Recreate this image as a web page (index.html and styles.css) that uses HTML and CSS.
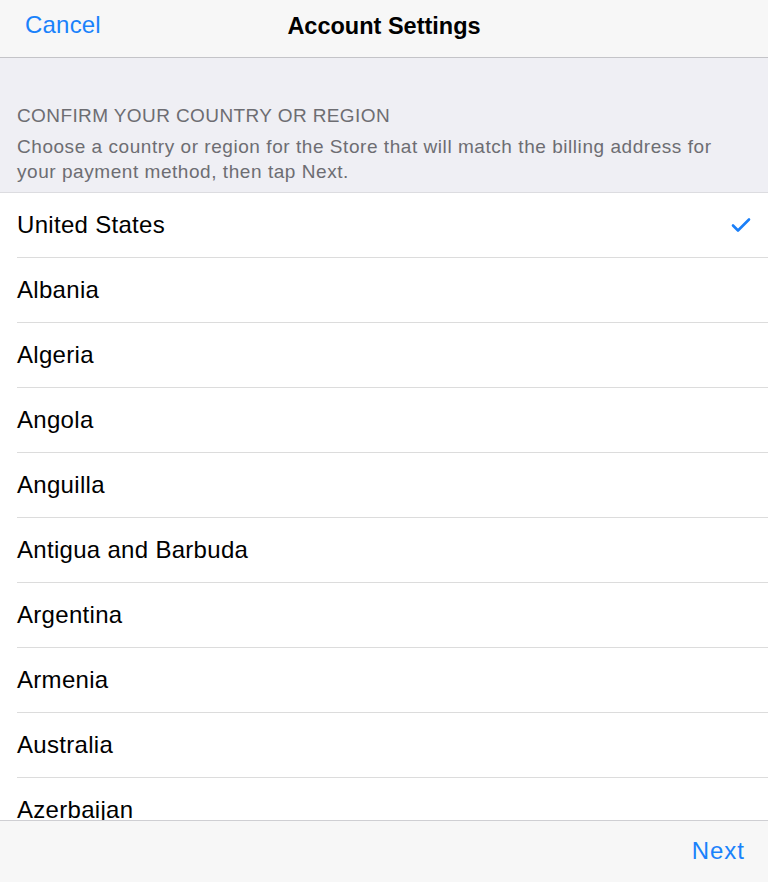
FILE: index.html
```html
<!DOCTYPE html>
<html>
<head>
<meta charset="utf-8">
<link rel="stylesheet" href="styles.css">
</head>
<body>
<div class="screen">
  <header class="navbar">
    <span class="nav-btn">Cancel</span>
    <span class="nav-title">Account Settings</span>
  </header>
  <section class="intro">
    <div class="intro-title">CONFIRM YOUR COUNTRY OR REGION</div>
    <div class="intro-text">Choose a country or region for the Store that will match the billing address for your payment method, then tap Next.</div>
  </section>
  <div class="list-wrap">
    <ul class="list">
      <li class="row"><span>United States</span>
        <svg class="check" width="20" height="16" viewBox="0 0 20 16"><polyline points="2,8.5 7,13.5 18,2.5" fill="none" stroke="#1a7ff8" stroke-width="2.6" stroke-linecap="round" stroke-linejoin="round"/></svg>
      </li>
      <li class="row"><span>Albania</span></li>
      <li class="row"><span>Algeria</span></li>
      <li class="row"><span>Angola</span></li>
      <li class="row"><span>Anguilla</span></li>
      <li class="row"><span>Antigua and Barbuda</span></li>
      <li class="row"><span>Argentina</span></li>
      <li class="row"><span>Armenia</span></li>
      <li class="row"><span>Australia</span></li>
      <li class="row"><span>Azerbaijan</span></li>
    </ul>
  </div>
  <footer class="toolbar">
    <span class="nav-btn">Next</span>
  </footer>
</div>
</body>
</html>
```
FILE: styles.css
```css
html, body {
  margin: 0;
  padding: 0;
  height: 100%;
  overflow: hidden;
}
body {
  font-family: "Liberation Sans", Arial, sans-serif;
  background: #ffffff;
  color: #000;
}
.screen {
  display: flex;
  flex-direction: column;
  height: 882px;
}
.navbar {
  flex: 0 0 auto;
  height: 57px;
  border-bottom: 1px solid #c4c4c8;
  background: #f7f7f7;
  position: relative;
  display: flex;
  align-items: center;
  justify-content: center;
}
.nav-btn {
  color: #1a82fb;
  font-size: 24px;
  letter-spacing: 0.2px;
}
.navbar .nav-btn {
  position: absolute;
  left: 25px;
  top: 11px;
}
.nav-title {
  font-size: 23.5px;
  font-weight: bold;
  margin-top: -4px;
}
.intro {
  flex: 0 0 auto;
  background: #efeff4;
  height: 135px;
  border-bottom: 1px solid #dcdce0;
  box-sizing: border-box;
  padding: 46px 30px 0 17px;
  color: #6d6d72;
}
.intro-title {
  font-size: 19px;
  line-height: 24px;
  letter-spacing: 0.4px;
  margin-bottom: 6px;
}
.intro-text {
  font-size: 19px;
  line-height: 25px;
  letter-spacing: 0.55px;
}
.list-wrap {
  flex: 1 1 auto;
  overflow: hidden;
}
.list {
  list-style: none;
  margin: 0;
  padding: 0 0 0 17px;
}
.row {
  box-sizing: border-box;
  height: 65px;
  padding-top: 0;
  border-bottom: 1px solid #dcdcdc;
  display: flex;
  align-items: center;
  justify-content: space-between;
  font-size: 24px;
  letter-spacing: 0.3px;
  padding-right: 17px;
}
.check {
  margin-top: 0;
}
.toolbar {
  flex: 0 0 auto;
  height: 61px;
  border-top: 1px solid #cfcfd3;
  background: #f7f7f7;
  display: flex;
  align-items: center;
  justify-content: flex-end;
  padding-right: 23px;
}
.toolbar .nav-btn {
  letter-spacing: 1px;
  margin-top: -2px;
}
```
